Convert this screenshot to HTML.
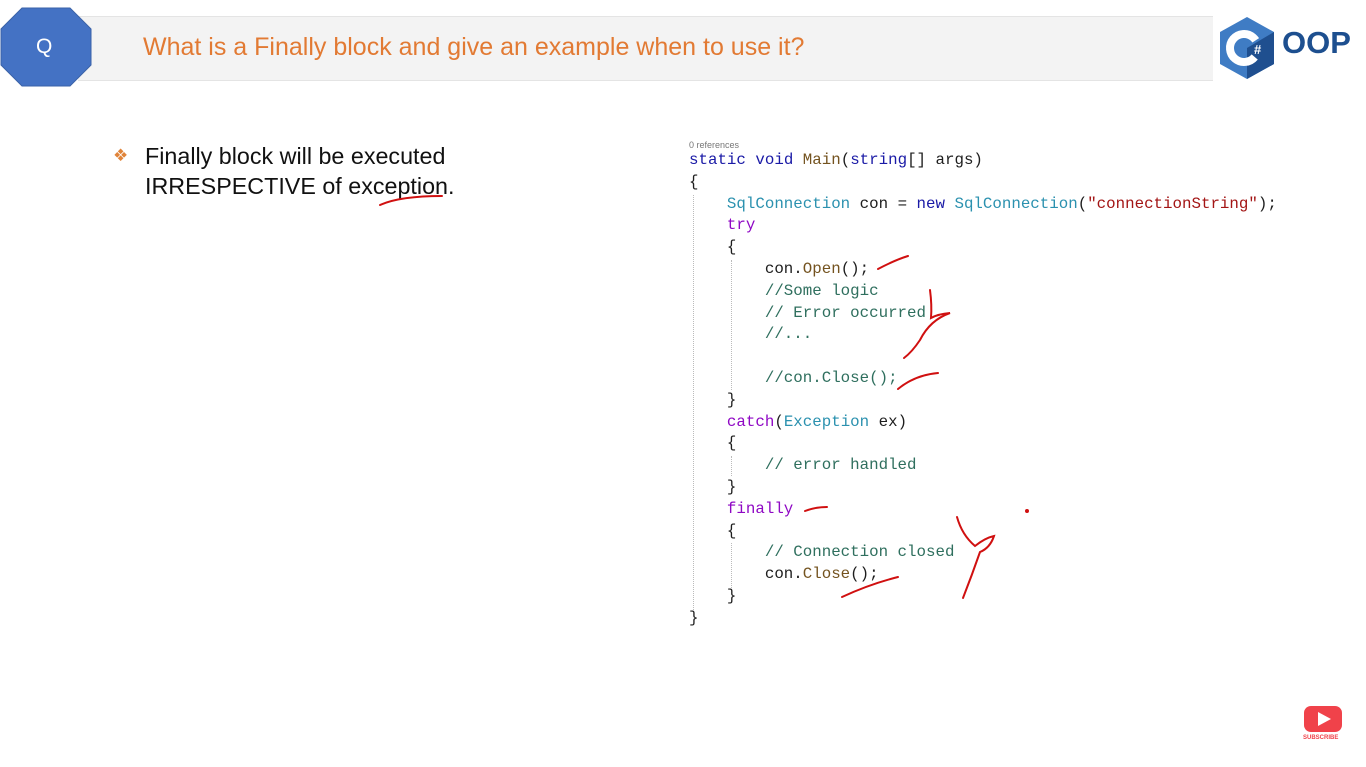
<!DOCTYPE html>
<html><head><meta charset="utf-8"><style>
html,body{margin:0;padding:0;background:#fff;width:1366px;height:767px;overflow:hidden;position:relative;font-family:"Liberation Sans",sans-serif}
.bar{position:absolute;left:78px;top:16px;width:1135px;height:63px;background:#f3f3f3;border-top:1px solid #e4e4e4;border-bottom:1px solid #e4e4e4}
.title{position:absolute;left:143px;top:33px;font-size:25px;color:#e27a33;white-space:nowrap}
.oct{position:absolute;left:0;top:7px}
.qt{position:absolute;left:36px;top:35px;color:#fff;font-size:21px}
.bullet{position:absolute;left:145px;top:141px;font-size:23.3px;line-height:30px;color:#111}
.code{position:absolute;left:689px;top:150px;font-family:"Liberation Mono",monospace;font-size:15.8px;line-height:21.8px;white-space:pre;color:#1e1e1e}
.k{color:#1a1aa6}.t{color:#2b91af}.p{color:#8f08c4}.c{color:#2f6f5e}.s{color:#a31515}.m{color:#74531f}
.ref{position:absolute;left:689px;top:140px;font-size:9px;color:#777}
.guide{position:absolute;border-left:1px dotted #bbb}
</style></head><body>
<div class="bar"></div>
<svg class="oct" width="92" height="80" viewBox="0 0 92 80"><polygon points="22,1 70,1 91,22 91,58 70,79 22,79 1,58 1,22" fill="#4472c4" stroke="#3a62a8"/></svg>
<div class="qt">Q</div>
<div class="title">What is a Finally block and give an example when to use it?</div>
<svg style="position:absolute;left:1217px;top:16px" width="60" height="64" viewBox="0 0 60 64">
<polygon points="30,1 57,16 57,48 30,63 3,48 3,16" fill="#3f7cc4"/>
<polygon points="30,63 57,48 57,16 30,32" fill="#1f4f8f"/>
<circle cx="27" cy="32" r="14" fill="none" stroke="#fff" stroke-width="8" stroke-dasharray="70 30" transform="rotate(40 27 32)"/>
<text x="37" y="38" font-size="13" font-weight="bold" fill="#fff" font-family="Liberation Sans">#</text>
</svg>
<div style="position:absolute;left:1282px;top:25px;font-size:31px;font-weight:bold;color:#1d4f8f">OOP</div>
<div style="position:absolute;left:113px;top:146px;color:#e0843a;font-size:17px">❖</div>
<div class="bullet">Finally block will be executed<br>IRRESPECTIVE of exception.</div>
<div class="ref">0 references</div>
<div class="guide" style="left:693px;top:195px;height:415px"></div>
<div class="guide" style="left:731px;top:260px;height:130px"></div>
<div class="guide" style="left:731px;top:456px;height:20px"></div>
<div class="guide" style="left:731px;top:543px;height:45px"></div>
<div class="code"><span class="k">static</span> <span class="k">void</span> <span class="m">Main</span>(<span class="k">string</span>[] args)
{
    <span class="t">SqlConnection</span> con = <span class="k">new</span> <span class="t">SqlConnection</span>(<span class="s">"connectionString"</span>);
    <span class="p">try</span>
    {
        con.<span class="m">Open</span>();
        <span class="c">//Some logic</span>
        <span class="c">// Error occurred</span>
        <span class="c">//...</span>

        <span class="c">//con.Close();</span>
    }
    <span class="p">catch</span>(<span class="t">Exception</span> ex)
    {
        <span class="c">// error handled</span>
    }
    <span class="p">finally</span>
    {
        <span class="c">// Connection closed</span>
        con.<span class="m">Close</span>();
    }
}</div>
<svg style="position:absolute;left:0;top:0" width="1366" height="767" fill="none" stroke="#d01010" stroke-width="2" stroke-linecap="round">
<path d="M380,205 Q400,196 442,196"/>
<path d="M878,269 Q895,260 908,256"/>
<path d="M930,290 Q932,305 931,318 Q938,314 950,313 Q930,320 920,340 Q912,352 904,358"/>
<path d="M898,389 Q915,375 938,373"/>
<path d="M805,511 Q815,507 827,507"/>
<path d="M957,517 Q962,535 975,546 Q985,538 994,536 Q990,548 980,552 Q972,575 963,598"/>
<path d="M842,597 Q870,584 898,577"/>
<circle cx="1027" cy="511" r="1" fill="#d01010"/>
</svg>
<svg style="position:absolute;left:1304px;top:706px" width="38" height="26" viewBox="0 0 38 26"><rect x="0" y="0" width="38" height="26" rx="7" fill="#f0424a"/><polygon points="14,6 27,13 14,20" fill="#fff"/></svg>
<div style="position:absolute;left:1303px;top:735px;font-size:6px;font-weight:bold;color:#f0424a">SUBSCRIBE</div>
</body></html>
